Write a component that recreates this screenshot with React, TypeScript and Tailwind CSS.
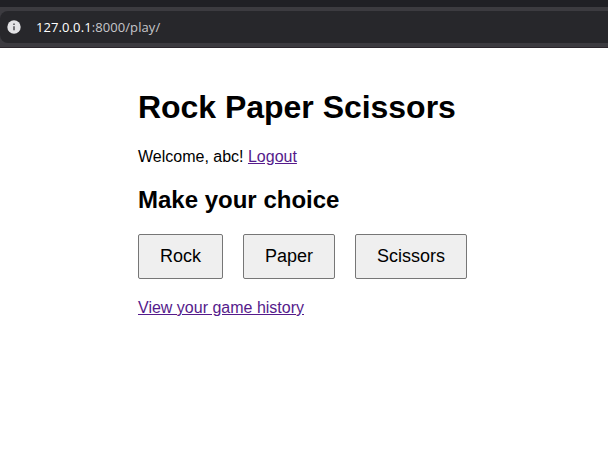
const choices = ["Rock", "Paper", "Scissors"];

function AddressBar() {
  return (
    <header className="h-12 border-b border-[#2b262c] bg-[#3c3b40]">
      <div className="h-[7px] bg-[#202025]" />
      <div className="mt-1 flex h-8 items-center rounded-l-lg bg-[#27272b] pl-[7px]">
        <svg width="14" height="14" viewBox="0 0 14 14" aria-hidden="true">
          <circle cx="7" cy="7" r="6.7" fill="#e3e3e6" />
          <path d="M6.2 6.2h1.6v4H6.2zM6.2 3.6h1.6v1.5H6.2z" fill="#56565b" />
        </svg>
        <span className="ml-[15px] pt-px font-['Open_Sans',sans-serif] text-[13px] tracking-[0.09px] text-[#c6c6ca]">
          <span className="text-white">127.0.0.1</span>:8000/play/
        </span>
      </div>
    </header>
  );
}

export default function App() {
  return (
    <div className="h-[455px] overflow-hidden bg-white font-['Liberation_Sans',Arial,sans-serif] text-base text-black">
      <AddressBar />
      <main className="pl-[138px] pt-[41px]">
        <h1 className="text-[32px] font-bold leading-[37px] tracking-[-0.03px]">Rock Paper Scissors</h1>
        <p className="mt-[22px] leading-[18px]">
          Welcome, abc! <a href="#" className="text-[#551a8b] underline">Logout</a>
        </p>
        <h2 className="mt-5 text-2xl font-bold leading-[28px]">Make your choice</h2>
        <div className="mt-5 flex gap-5">
          {choices.map((choice) => (
            <button key={choice} className="h-[45px] rounded-[2px] border border-[#767676] bg-[#efefef] px-[21px] pb-0.5 text-lg">
              {choice}
            </button>
          ))}
        </div>
        <p className="mt-5 leading-[18px]">
          <a href="#" className="text-[#551a8b] underline">View your game history</a>
        </p>
      </main>
    </div>
  );
}
